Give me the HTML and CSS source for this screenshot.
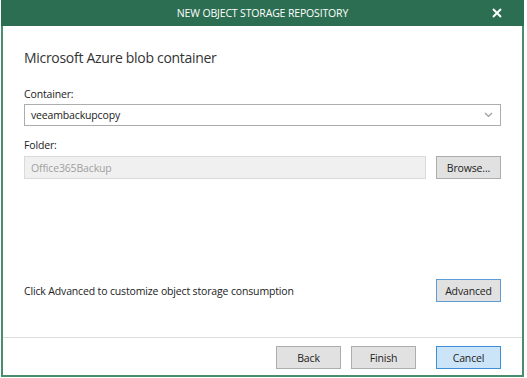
FILE: index.html
```html
<!DOCTYPE html>
<html lang="en">
<head>
    <meta charset="UTF-8" />
    <meta name="viewport" content="width=device-width, initial-scale=1.0" />
    <title>New Object Storage Repository</title>
    <link rel="stylesheet" href="styles.css">
</head>
<body>
    <div class="window">
        <header class="titlebar">
            <span class="title">NEW OBJECT STORAGE REPOSITORY</span>
            <span class="close">
                <svg width="10" height="10" viewBox="0 0 10 10">
                    <path d="M1 1 L9 9 M9 1 L1 9" stroke="#ffffff" stroke-width="2" />
                </svg>
            </span>
        </header>

        <main class="content">
            <div class="panel">
                <h1>Microsoft Azure blob container</h1>

                <label class="field-label">Container:</label>
                <div class="combo">
                    <span>veeambackupcopy</span>
                    <svg class="chevron" width="9" height="6" viewBox="0 0 9 6">
                        <polyline points="1,1 4.5,4.5 8,1" fill="none" stroke="#9a9a9a" stroke-width="1.2" />
                    </svg>
                </div>

                <label class="field-label folder-label">Folder:</label>
                <div class="folder-row">
                    <div class="text-input disabled">Office365Backup</div>
                    <button class="btn">Browse...</button>
                </div>

                <div class="spacer"></div>

                <div class="advanced-row">
                    <span>Click Advanced to customize object storage consumption</span>
                    <button class="btn btn-focus">Advanced</button>
                </div>
            </div>

            <footer class="actions">
                <button class="btn">Back</button>
                <button class="btn">Finish</button>
                <button class="btn btn-default">Cancel</button>
            </footer>
        </main>
    </div>
</body>
</html>
```

FILE: styles.css
```css
body {
    font-family: 'Open Sans', 'Noto Sans', sans-serif;
    margin: 0;
    padding: 0;
    background-color: #ffffff;
    color: #222;
}

.window {
    width: 523px;
    height: 377px;
    margin-left: 1px;
    display: flex;
    flex-direction: column;
}

.titlebar {
    height: 26px;
    background-color: #2c6e51;
    color: white;
    display: flex;
    align-items: center;
    justify-content: center;
    position: relative;
}

.title {
    font-size: 10.5px;
    letter-spacing: -0.15px;
}

.close {
    position: absolute;
    right: 22px;
    top: 8px;
    display: flex;
}

.content {
    flex: 1;
    display: flex;
    flex-direction: column;
    border: 2px solid #4a8c6e;
    border-top: none;
}

.panel {
    flex: 1;
    display: flex;
    flex-direction: column;
    padding: 0 21px 0 21px;
}

h1 {
    font-size: 14px;
    font-weight: normal;
    color: #333;
    line-height: 20px;
    letter-spacing: -0.3px;
    margin: 22px 0 0 0;
}

.field-label {
    display: block;
    font-size: 10.5px;
    letter-spacing: -0.15px;
    line-height: 16px;
    margin-top: 18px;
    color: #222;
}

.folder-label {
    margin-top: 11px;
}

.combo {
    margin-top: 2px;
    height: 22px;
    box-sizing: border-box;
    border: 1px solid #adadad;
    display: flex;
    align-items: center;
    justify-content: space-between;
    padding: 0 7px 0 6px;
    font-size: 10.5px;
    letter-spacing: -0.15px;
    color: #222;
}

.folder-row {
    margin-top: 3px;
    display: flex;
    gap: 10px;
}

.text-input {
    flex: 1;
    height: 23px;
    box-sizing: border-box;
    border: 1px solid #dadada;
    padding: 0 6px;
    font-size: 10.5px;
    letter-spacing: -0.15px;
    display: flex;
    align-items: center;
}

.text-input.disabled {
    background-color: #f0f0f0;
    color: #a0a0a0;
}

.btn {
    width: 65px;
    height: 23px;
    box-sizing: border-box;
    border: 1px solid #adadad;
    background-color: #e1e1e1;
    font-family: inherit;
    font-size: 10.5px;
    letter-spacing: -0.15px;
    color: #222;
    padding: 0;
}

.btn-focus {
    border-color: #5c9bd6;
}

.btn-default {
    background-color: #cce4f7;
    border-color: #3c8fd8;
}

.spacer {
    flex: 1;
}

.advanced-row {
    display: flex;
    align-items: center;
    justify-content: space-between;
    font-size: 10.5px;
    letter-spacing: -0.15px;
    margin-bottom: 35px;
}

.actions {
    border-top: 1px solid #dcdcdc;
    display: flex;
    justify-content: flex-end;
    gap: 10px;
    padding: 8px 21px 6px 0;
}

.actions .btn-default {
    margin-left: 10px;
}
```
